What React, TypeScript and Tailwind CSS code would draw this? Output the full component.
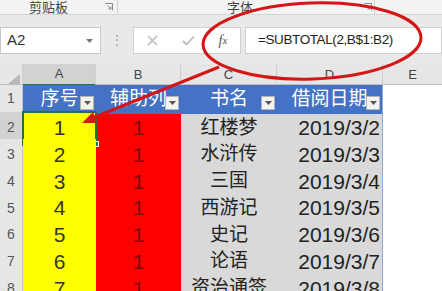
import React from 'react';

// 表格数据：序号 / 辅助列 / 书名 / 借阅日期
const ROWS: [number, string, string][] = [
  [1, '红楼梦', '2019/3/2'],
  [2, '水浒传', '2019/3/3'],
  [3, '三国', '2019/3/4'],
  [4, '西游记', '2019/3/5'],
  [5, '史记', '2019/3/6'],
  [6, '论语', '2019/3/7'],
  [7, '资治通签', '2019/3/8'],
];

const GRID = 'grid grid-cols-[23px_73px_85px_96px_106px_1fr]';

const Launcher: React.FC = () => (
  <svg width="8" height="8" viewBox="0 0 8 8" className="shrink-0">
    <path d="M0.5 0.5H7.5V7.5" fill="none" stroke="#8a8a8a" strokeWidth="1" />
    <path d="M2.5 2.5L6 6M6 3.5V6H3.5" fill="none" stroke="#8a8a8a" strokeWidth="1" />
  </svg>
);

const FilterBtn: React.FC = () => (
  <span className="absolute right-[2px] bottom-[4px] w-[14px] h-[14px] bg-[#f3f3f3] border border-[#b5b5b5] flex items-center justify-center">
    <svg width="7" height="4" viewBox="0 0 7 4">
      <path d="M0 0H7L3.5 4Z" fill="#555" />
    </svg>
  </span>
);

const App: React.FC = () => {
  return (
    <div className="relative w-[442px] h-[291px] overflow-hidden bg-[#e9e9e9] font-['Liberation_Sans','Noto_Sans_CJK_SC',sans-serif] text-[#333]">
      {/* 功能区分组标题 */}
      <div className="flex h-[15px] bg-[#f3f3f3] border-b border-[#d4d4d4] text-[13px] leading-none text-[#444]">
        <div className="w-[118px] flex items-center justify-between pl-[29px] pr-[4px] border-r border-[#d0d0d0]">
          <span>剪贴板</span>
          <Launcher />
        </div>
        <div className="w-[257px] flex items-center justify-between pl-[109px] pr-[2px] border-r border-[#d0d0d0]">
          <span>字体</span>
          <Launcher />
        </div>
      </div>

      <div className="h-[12px]" />

      {/* 编辑栏 */}
      <div className="flex h-[27px]">
        <div className="w-[101px] bg-white border border-[#c6c6c6] flex items-center justify-between pl-[6px] pr-[7px]">
          <span className="text-[15px] text-[#333]">A2</span>
          <svg width="7" height="4" viewBox="0 0 7 4">
            <path d="M0 0H7L3.5 4Z" fill="#777" />
          </svg>
        </div>
        <div className="w-[32px] flex items-center justify-center text-[#aaa] text-[14px]">⋮</div>
        <div className="w-[108px] bg-white border border-[#d0d0d0] flex">
          <div className="w-[36px] flex items-center justify-center">
            <svg width="11" height="11" viewBox="0 0 11 11">
              <path d="M1 1L10 10M10 1L1 10" stroke="#bdbdbd" strokeWidth="1.6" />
            </svg>
          </div>
          <div className="w-[36px] flex items-center justify-center">
            <svg width="13" height="11" viewBox="0 0 13 11">
              <path d="M1 6L4.5 9.5L12 1.5" fill="none" stroke="#bdbdbd" strokeWidth="1.8" />
            </svg>
          </div>
          <div className="flex-1 flex items-center justify-center font-['Liberation_Serif',serif] italic text-[14px] text-[#555]">
            f<span className="text-[11px]">x</span>
          </div>
        </div>
        <div className="ml-[4px] flex-1 bg-white border border-[#d0d0d0] flex items-center pl-[12px] text-[13.5px] tracking-[-0.4px] text-[#222]">
          =SUBTOTAL(2,B$1:B2)
        </div>
      </div>

      <div className="h-[10px]" />

      {/* 列标题 */}
      <div className={`${GRID} h-[21px] text-[13px] text-[#444] bg-[#e6e6e6] border-b border-[#bdbdbd]`}>
        <div className="relative border-r border-[#cfcfcf]">
          <svg width="12" height="10" viewBox="0 0 12 10" className="absolute right-[2px] bottom-[2px]">
            <path d="M12 0V10H0Z" fill="#b8b8b8" />
          </svg>
        </div>
        <div className="flex items-center justify-center bg-[#d2d2d2] border-r border-[#cfcfcf] border-b-2 border-b-[#217346]">A</div>
        <div className="flex items-center justify-center border-r border-[#cfcfcf]">B</div>
        <div className="flex items-center justify-center border-r border-[#cfcfcf]">C</div>
        <div className="flex items-center justify-center border-r border-[#cfcfcf]">D</div>
        <div className="flex items-center justify-center">E</div>
      </div>

      {/* 第 1 行：表头 */}
      <div className={`${GRID} h-[27px] text-[19px]`}>
        <div className="flex items-center justify-center bg-[#e6e6e6] border-r border-b border-[#c6c6c6] text-[14px] text-[#555]">1</div>
        <div className="relative flex items-center justify-center bg-[#4472c4] text-white">
          序号
          <FilterBtn />
        </div>
        <div className="relative flex items-center justify-center bg-[#4472c4] text-white overflow-hidden whitespace-nowrap">
          辅助列
          <FilterBtn />
        </div>
        <div className="relative flex items-center justify-center bg-[#4472c4] text-white">
          书名
          <FilterBtn />
        </div>
        <div className="relative flex items-center justify-center bg-[#4472c4] text-white border-r border-[#8ea9db] overflow-hidden whitespace-nowrap">
          借阅日期
          <FilterBtn />
        </div>
        <div className="bg-white border-b border-[#d4d4d4]" />
      </div>

      {/* 数据行 */}
      {ROWS.map(([no, name, date], i) => (
        <div key={no} className={`${GRID} h-[26.8px]`}>
          <div
            className={`flex items-center justify-center border-r border-b border-[#c6c6c6] text-[14px] text-[#555] ${
              i === 0 ? 'bg-[#d2d2d2]' : 'bg-[#e6e6e6]'
            }`}
          >
            {no + 1}
          </div>
          <div
            className={`relative flex items-center justify-center bg-[#ffff00] border-b border-[#b9c6de] text-[21px] text-[#333] ${
              i === 0 ? 'outline-2 outline-[#217346] -outline-offset-1' : ''
            }`}
          >
            {no}
            {i === 0 && (
              <span className="absolute -right-[3px] -bottom-[3px] w-[6px] h-[6px] bg-[#217346] border border-white" />
            )}
          </div>
          <div className="flex items-center justify-center bg-[#ff0000] border-b border-[#c99aa8] text-[21px] text-[#7a0a0a]">1</div>
          <div className="flex items-center justify-center bg-[#d9d9d9] border-b border-[#a6badf] text-[19px] text-[#222] whitespace-nowrap">
            {name}
          </div>
          <div className="flex items-center justify-end pr-[2px] bg-[#d9d9d9] border-b border-r border-[#a6badf] border-r-[#8ea9db] text-[21px] text-[#222]">
            {date}
          </div>
          <div className="bg-white border-b border-[#d4d4d4]" />
        </div>
      ))}

      {/* 红色圈注与箭头 */}
      <svg className="absolute inset-0 pointer-events-none" width="442" height="291" viewBox="0 0 442 291">
        <ellipse cx="312" cy="41" rx="109" ry="38" fill="none" stroke="#d41616" strokeWidth="3" transform="rotate(-2 312 41)" />
        <line x1="219" y1="67" x2="90" y2="119" stroke="#d41616" strokeWidth="3" />
        <polygon points="82,123 97,123 93,112" fill="#d41616" />
      </svg>
    </div>
  );
};

export default App;
